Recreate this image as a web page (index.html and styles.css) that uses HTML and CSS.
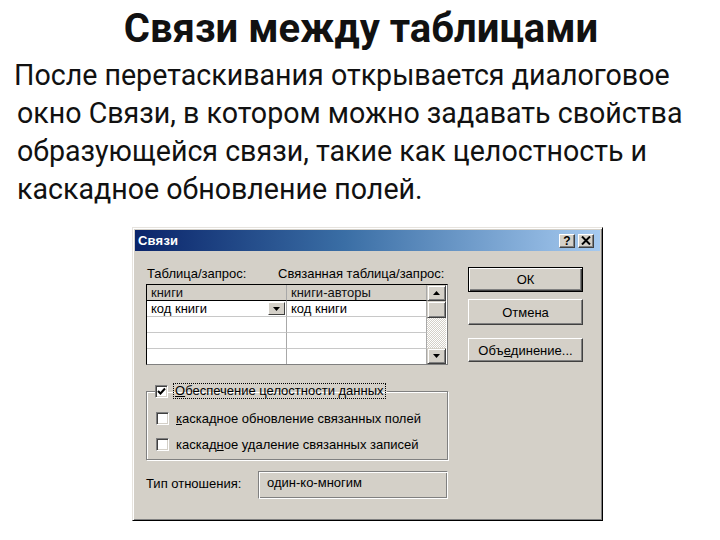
FILE: index.html
```html
<!DOCTYPE html>
<html lang="ru">
<head>
<meta charset="utf-8">
<title>Связи между таблицами</title>
<link rel="stylesheet" href="styles.css">
</head>
<body>
<div class="slide">
  <h1 class="title">Связи между таблицами</h1>
  <p class="text">После перетаскивания открывается диалоговое<br>окно Связи, в котором можно задавать свойства<br>образующейся связи, такие как целостность и<br>каскадное обновление полей.</p>

  <div class="dialog">
    <div class="titlebar">
      <span class="ttl">Связи</span>
      <span class="tbtns">
        <span class="tbtn">?</span>
        <span class="tbtn">
          <svg width="10" height="9" viewBox="0 0 10 9"><path d="M1 0.5 L9 8.5 M9 0.5 L1 8.5" stroke="#000" stroke-width="2"/></svg>
        </span>
      </span>
    </div>
    <div class="content">
      <div class="left">
        <div class="labels">
          <span class="lab1">Таблица/запрос:</span>
          <span>Связанная таблица/запрос:</span>
        </div>
        <div class="grid">
          <div class="cell head">книги</div>
          <div class="cell head">книги-авторы</div>
          <div class="scroll">
            <div class="sbtn"><svg width="7" height="4" viewBox="0 0 7 4"><path d="M3.5 0 L7 4 L0 4 Z" fill="#000"/></svg></div>
            <div class="sthumb"></div>
            <div class="strack"></div>
            <div class="sbtn"><svg width="7" height="4" viewBox="0 0 7 4"><path d="M0 0 L7 0 L3.5 4 Z" fill="#000"/></svg></div>
          </div>
          <div class="cell combo"><span>код книги</span><span class="dd"><svg width="7" height="4" viewBox="0 0 7 4"><path d="M0 0 L7 0 L3.5 4 Z" fill="#000"/></svg></span></div>
          <div class="cell">код книги</div>
          <div class="cell"></div>
          <div class="cell"></div>
          <div class="cell"></div>
          <div class="cell"></div>
          <div class="cell last"></div>
          <div class="cell last"></div>
        </div>

        <fieldset class="group">
          <legend class="chk">
            <span class="box"><svg width="9" height="9" viewBox="0 0 9 9"><path d="M1 4 L3.5 6.5 L8 1.5" stroke="#000" stroke-width="2" fill="none"/></svg></span>
            <span class="focus"><u>О</u>беспечение целостности данных</span>
          </legend>
          <div class="chk row2">
            <span class="box"></span>
            <span class="ltxt"><u>к</u>аскадное обновление связанных полей</span>
          </div>
          <div class="chk row3">
            <span class="box"></span>
            <span class="ltxt">каскад<u>н</u>ое удаление связанных записей</span>
          </div>
        </fieldset>

        <div class="typerow">
          <span class="tlab">Тип отношения:</span>
          <span class="field">один-ко-многим</span>
        </div>
      </div>
      <div class="right">
        <div class="btn default">ОК</div>
        <div class="btn b2">Отмена</div>
        <div class="btn b3">Объ<u>е</u>динение...</div>
      </div>
    </div>
  </div>
</div>
</body>
</html>
```
FILE: styles.css
```css
html, body {
  margin: 0;
  padding: 0;
  background: #ffffff;
}

.slide {
  width: 720px;
  height: 540px;
  overflow: hidden;
  position: relative;
}

.title {
  margin: 0;
  padding-top: 6px;
  height: 50px;
  text-align: center;
  font-family: Roboto, "Noto Sans", sans-serif;
  font-weight: 700;
  font-size: 40px;
  line-height: 46px;
  color: #111;
  padding-left: 2px;
}

.text {
  margin: 0;
  padding-left: 17px;
  font-family: Roboto, "Noto Sans", sans-serif;
  font-size: 28.6px;
  line-height: 38px;
  color: #111;
  text-indent: -3px;
  height: 152px;
}

/* dialog */
.dialog {
  margin-top: 19px;
  margin-left: 132px;
  width: 471px;
  height: 294px;
  box-sizing: border-box;
  background: #d4d0c8;
  border: 1px solid;
  border-color: #e6e3de #000 #000 #e6e3de;
  box-shadow: inset 1px 1px #ffffff, inset -1px -1px #808080;
  padding: 2px;
  font-family: "Liberation Sans", Arial, sans-serif;
  font-size: 13px;
  color: #000;
}

.titlebar {
  height: 21px;
  background: linear-gradient(to right, #0a246a 0%, #3a6ea5 45%, #a6caf0 100%);
  display: flex;
  align-items: center;
  justify-content: space-between;
  padding: 0 6px 0 3px;
}

.ttl {
  color: #fff;
  font-weight: 700;
  font-size: 13px;
  letter-spacing: 0.2px;
}

.tbtns {
  display: flex;
  gap: 3px;
}

.tbtn {
  width: 16px;
  height: 14px;
  box-sizing: border-box;
  background: #d4d0c8;
  border: 1px solid;
  border-color: #fff #404040 #404040 #fff;
  box-shadow: inset -1px -1px #808080;
  display: flex;
  align-items: center;
  justify-content: center;
  font-weight: 700;
  font-size: 12px;
  line-height: 12px;
}

.content {
  display: flex;
  padding: 0 0 0 11px;
}

.left {
  width: 302px;
  padding-top: 15px;
}

.labels {
  display: flex;
  height: 16px;
  line-height: 16px;
  font-size: 13px;
}

.lab1 {
  width: 131px;
  padding-left: 1px;
}

.grid {
  margin-top: 2px;
  display: grid;
  grid-template-columns: 140px 140px 19px;
  grid-template-rows: repeat(4, 16px) 15px;
  border: 1px solid #000;
  border-right-color: #808080;
  border-bottom-color: #808080;
  background: #fff;
  width: 302px;
  box-sizing: border-box;
}

.cell {
  border-right: 1px solid #a8a8a8;
  border-bottom: 1px solid #c8c8c8;
  padding-left: 4px;
  line-height: 15px;
  font-size: 13px;
  white-space: nowrap;
  overflow: hidden;
}

.cell.last {
  border-bottom: none;
}

.head {
  background: #d4d0c8;
  border-bottom-color: #000;
  color: #111;
}

.combo {
  display: flex;
  justify-content: space-between;
  padding-right: 1px;
}

.dd {
  width: 17px;
  height: 13px;
  margin-top: 1px;
  box-sizing: border-box;
  background: #d4d0c8;
  border: 1px solid;
  border-color: #fff #404040 #404040 #fff;
  display: flex;
  align-items: center;
  justify-content: center;
}

.scroll {
  grid-column: 3;
  grid-row: 1 / span 5;
  display: flex;
  flex-direction: column;
}

.sbtn {
  height: 16px;
  box-sizing: border-box;
  background: #d4d0c8;
  border: 1px solid;
  border-color: #d4d0c8 #404040 #404040 #d4d0c8;
  box-shadow: inset 1px 1px #fff, inset -1px -1px #808080;
  display: flex;
  align-items: center;
  justify-content: center;
}

.sthumb {
  height: 17px;
  box-sizing: border-box;
  background: #d4d0c8;
  border: 1px solid;
  border-color: #d4d0c8 #404040 #404040 #d4d0c8;
  box-shadow: inset 1px 1px #fff, inset -1px -1px #808080;
}

.strack {
  flex: 1;
  background: repeating-conic-gradient(#ffffff 0 25%, #d4d0c8 0 50%) 0 0 / 2px 2px;
}

/* group box */
.group {
  margin: 19px 0 0 0;
  padding: 0 8px 8px 9px;
  width: 302px;
  box-sizing: border-box;
  border: 1px solid #808080;
  box-shadow: inset 1px 1px #fff, 1px 1px #fff;
  min-width: 0;
}

.chk {
  display: flex;
  align-items: center;
  height: 14px;
  font-size: 13px;
  white-space: nowrap;
}

legend.chk {
  padding: 0 2px 0 0;
  margin-left: -1px;
}

.row2 {
  margin-top: 13px;
}

.row3 {
  margin-top: 12px;
}

.box {
  width: 13px;
  height: 13px;
  box-sizing: border-box;
  background: #fff;
  border: 1px solid;
  border-color: #808080 #fff #fff #808080;
  box-shadow: inset 1px 1px #404040, inset -1px -1px #d4d0c8;
  display: flex;
  align-items: center;
  justify-content: center;
  flex: none;
}

.focus {
  margin-left: 6px;
  padding: 0 1px;
  outline: 1px dotted #000;
  line-height: 14px;
}

.ltxt {
  margin-left: 7px;
}

.typerow {
  margin-top: 11px;
  display: flex;
  align-items: center;
  font-size: 13px;
}

.tlab {
  width: 112px;
  margin-top: -4px;
}

.field {
  width: 190px;
  height: 28px;
  box-sizing: border-box;
  border: 1px solid;
  border-color: #808080 #fff #fff #808080;
  box-shadow: inset 1px 1px #fff, inset -1px -1px #808080;
  padding-left: 8px;
  line-height: 22px;
}

.right {
  margin-left: 20px;
  padding-top: 16px;
  width: 115px;
}

.btn {
  height: 25px;
  box-sizing: border-box;
  background: #d4d0c8;
  border: 1px solid;
  border-color: #fff #404040 #404040 #fff;
  box-shadow: inset -1px -1px #808080;
  display: flex;
  align-items: center;
  justify-content: center;
  font-size: 13px;
}

.btn.default {
  border: 1px solid #000;
  box-shadow: inset 1px 1px #fff, inset -1px -1px #404040, inset -2px -2px #808080;
}

.b2 {
  margin-top: 7px;
  height: 26px;
}

.b3 {
  margin-top: 13px;
  height: 24px;
}
```
